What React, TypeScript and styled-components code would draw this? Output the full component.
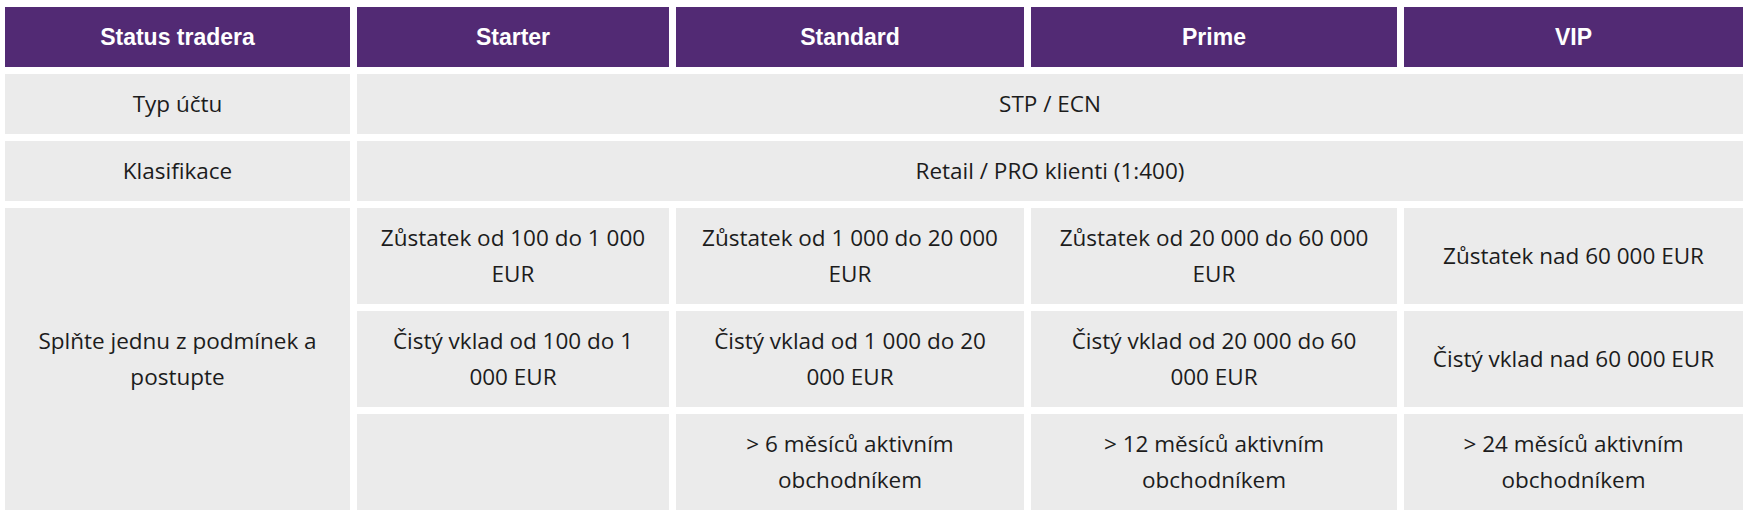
import React from "react";
import styled, { createGlobalStyle } from "styled-components";

const Global = createGlobalStyle`
  html, body { margin: 0; padding: 0; background: #ffffff; }
  body { font-family: "Open Sans", "Liberation Sans", sans-serif; }
`;

const Table = styled.div`
  display: grid;
  grid-template-columns: 345px 312px 348px 366px 339px;
  grid-template-rows: 60px 60px 60px 96px 96px 96px;
  gap: 7px;
  padding: 7px 5px 6px 5px;
  width: 1748px;
  box-sizing: border-box;
`;

const HeadCell = styled.div`
  background: #522a74;
  color: #ffffff;
  font-family: "Liberation Sans", Arial, sans-serif;
  font-weight: 700;
  font-size: 23px;
  line-height: 36px;
  display: flex;
  align-items: center;
  justify-content: center;
  text-align: center;
`;

const Cell = styled.div<{ $colSpan?: number; $rowSpan?: number }>`
  background: #ebebeb;
  color: #1c1c1c;
  font-family: "Open Sans", "Liberation Sans", sans-serif;
  font-size: 22.5px;
  line-height: 36px;
  display: flex;
  align-items: center;
  justify-content: center;
  text-align: center;
  white-space: nowrap;
  grid-column: ${(p) => (p.$colSpan ? `span ${p.$colSpan}` : "auto")};
  grid-row: ${(p) => (p.$rowSpan ? `span ${p.$rowSpan}` : "auto")};
`;

const Lines = styled.span`
  display: block;
`;

const headers = ["Status tradera", "Starter", "Standard", "Prime", "VIP"];

const balance: string[][] = [
  ["Zůstatek od 100 do 1 000", "EUR"],
  ["Zůstatek od 1 000 do 20 000", "EUR"],
  ["Zůstatek od 20 000 do 60 000", "EUR"],
  ["Zůstatek nad 60 000 EUR"],
];

const deposit: string[][] = [
  ["Čistý vklad od 100 do 1", "000 EUR"],
  ["Čistý vklad od 1 000 do 20", "000 EUR"],
  ["Čistý vklad od 20 000 do 60", "000 EUR"],
  ["Čistý vklad nad 60 000 EUR"],
];

const activity: string[][] = [
  [],
  ["> 6 měsíců aktivním", "obchodníkem"],
  ["> 12 měsíců aktivním", "obchodníkem"],
  ["> 24 měsíců aktivním", "obchodníkem"],
];

const MultiLine: React.FC<{ lines: string[] }> = ({ lines }) => (
  <Lines>
    {lines.map((l, i) => (
      <React.Fragment key={i}>
        {i > 0 && <br />}
        {l}
      </React.Fragment>
    ))}
  </Lines>
);

export default function App() {
  return (
    <>
      <Global />
      <Table>
        {headers.map((h) => (
          <HeadCell key={h}>{h}</HeadCell>
        ))}

        <Cell>Typ účtu</Cell>
        <Cell $colSpan={4}>STP / ECN</Cell>

        <Cell>Klasifikace</Cell>
        <Cell $colSpan={4}>Retail / PRO klienti (1:400)</Cell>

        <Cell $rowSpan={3}>
          <MultiLine lines={["Splňte jednu z podmínek a", "postupte"]} />
        </Cell>
        {balance.map((b, i) => (
          <Cell key={"b" + i}>
            <MultiLine lines={b} />
          </Cell>
        ))}
        {deposit.map((d, i) => (
          <Cell key={"d" + i}>
            <MultiLine lines={d} />
          </Cell>
        ))}
        {activity.map((a, i) => (
          <Cell key={"a" + i}>
            <MultiLine lines={a} />
          </Cell>
        ))}
      </Table>
    </>
  );
}
